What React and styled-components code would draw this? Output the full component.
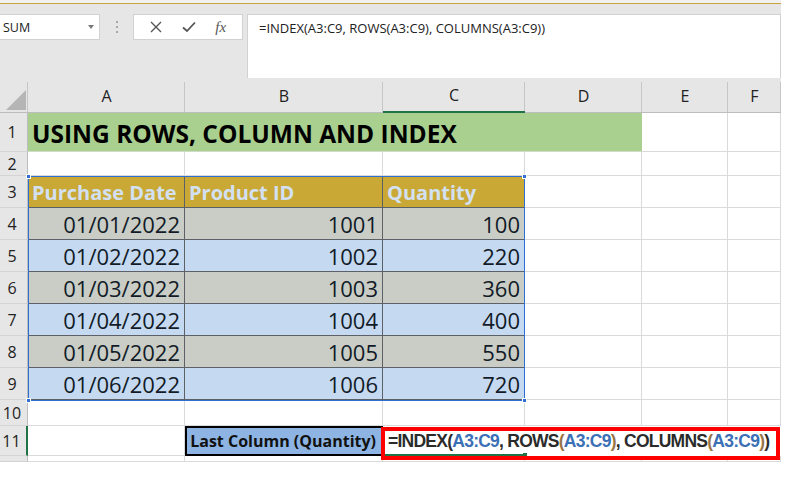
import React from 'react';
import styled, { createGlobalStyle } from 'styled-components';

const GlobalStyle = createGlobalStyle`
  html, body {
    margin: 0;
    padding: 0;
    background: #fff;
  }
  body {
    width: 792px;
    height: 480px;
    overflow: hidden;
    font-family: "Open Sans", "Noto Sans", sans-serif;
  }
  * { box-sizing: border-box; }
`;

const COLS = '28px 157px 198px 142px 117px 86px 53px';

const Page = styled.div`
  width: 792px;
  height: 480px;
  background: #fff;
`;

const Excel = styled.div`
  width: 781px;
  display: flex;
  flex-direction: column;
`;

const Ribbon = styled.div`
  height: 78px;
  background: #e6e6e6;
  border-top: 3px solid #f1f1f1;
  display: flex;
  flex-direction: column;
`;

const GoldLine = styled.div`
  height: 1px;
  background: #c9a43c;
`;

const Toolbar = styled.div`
  flex: 1;
  display: flex;
  align-items: flex-start;
  padding-top: 10px;
`;

const NameBox = styled.div`
  width: 100px;
  height: 26px;
  background: #fff;
  border: 1px solid #d2d2d2;
  border-left: none;
  display: flex;
  align-items: center;
  justify-content: space-between;
  padding: 0 5px 0 3px;
  font-size: 12.5px;
  color: #222;
`;

const Caret = styled.span`
  width: 0;
  height: 0;
  border-left: 3px solid transparent;
  border-right: 3px solid transparent;
  border-top: 4px solid #7a7a7a;
`;

const Grip = styled.div`
  width: 33px;
  height: 26px;
  display: flex;
  flex-direction: column;
  align-items: center;
  justify-content: center;
  gap: 3px;
`;

const Dot = styled.span`
  width: 2px;
  height: 2px;
  background: #a8a8a8;
`;

const ButtonBox = styled.div`
  width: 110px;
  height: 26px;
  background: #fff;
  border: 1px solid #d2d2d2;
  display: flex;
  align-items: center;
  justify-content: space-around;
  padding: 0 6px;
  color: #555;
`;

const Fx = styled.span`
  font-family: "Liberation Serif", serif;
  font-style: italic;
  font-size: 15px;
  color: #555;
  line-height: 1;
`;

const FormulaBar = styled.div`
  margin-left: 4px;
  flex: 1;
  height: 64px;
  background: #fff;
  border: 1px solid #d2d2d2;
  border-bottom: none;
  padding: 4px 11px;
  font-size: 13px;
  color: #222;
`;

const Sheet = styled.div`
  position: relative;
  display: flex;
  flex-direction: column;
`;

const Row = styled.div`
  display: grid;
  grid-template-columns: ${COLS};
  height: ${p => p.$h}px;
`;

const ColHead = styled.div`
  position: relative;
  background: #e6e6e6;
  border-bottom: 1px solid #bdbdbd;
  display: flex;
  align-items: flex-end;
  justify-content: center;
  padding-bottom: 5px;
  font-size: 16px;
  color: #222;
  &::after {
    content: '';
    position: absolute;
    right: 0;
    top: 4px;
    bottom: 0;
    width: 1px;
    background: #c6c6c6;
  }
  ${p => p.$active && `border-bottom: 2px solid #217346;`}
`;

const Corner = styled(ColHead)`
  padding: 0 2px 2px 0;
  justify-content: flex-end;
`;

const RowHead = styled.div`
  background: #e6e6e6;
  border-right: 1px solid #bdbdbd;
  border-bottom: 1px solid #d4d4d4;
  display: flex;
  align-items: center;
  justify-content: center;
  padding-right: 3px;
  font-size: 16px;
  color: #222;
  ${p => p.$active && `border-right: 2px solid #217346;`}
`;

const Cell = styled.div`
  position: relative;
  background: ${p => p.$bg || '#fff'};
  border-right: 1px solid ${p => (p.$dark ? '#5c6167' : '#dadada')};
  border-bottom: 1px solid ${p => (p.$dark ? '#5c6167' : '#dadada')};
  grid-column: span ${p => p.$span || 1};
  display: flex;
  align-items: center;
  justify-content: ${p => (p.$right ? 'flex-end' : 'flex-start')};
  padding: 0 4px;
  font-size: 22px;
  color: #121b27;
  white-space: nowrap;
`;

const Title = styled(Cell)`
  font-size: 24.5px;
  font-weight: 700;
  color: #000;
  padding-left: 4px;
  padding-top: 2px;
  border-right: none;
  border-bottom-color: #d0dcc8;
`;

const HeadCell = styled(Cell)`
  font-size: 20px;
  font-weight: 700;
  color: #d3e0f1;
  padding-top: 1px;
`;

const Label = styled.div`
  background: #8db4e2;
  border: 2px solid #000;
  display: flex;
  align-items: center;
  justify-content: flex-end;
  padding-right: 5px;
  font-size: 16px;
  font-weight: 700;
  color: #111;
  white-space: nowrap;
`;

const FormulaCell = styled.div`
  position: relative;
  z-index: 2;
  grid-column: span 4;
  display: flex;
  align-items: center;
  padding-left: 5px;
  font-family: "Liberation Sans", Arial, sans-serif;
  font-weight: 700;
  font-size: 17.5px;
  letter-spacing: -0.75px;
  color: #2b2b2b;
  white-space: nowrap;
`;

const RedFrame = styled.div`
  position: absolute;
  left: -2px;
  top: 1px;
  right: 1px;
  bottom: -4px;
  border: 4px solid #ff0000;
  pointer-events: none;
`;

const ActiveLine = styled.div`
  position: absolute;
  left: 2px;
  width: 140px;
  bottom: 0;
  height: 2px;
  background: #217346;
  &::after {
    content: '';
    position: absolute;
    right: -2px;
    top: -1px;
    width: 4px;
    height: 4px;
    background: #217346;
  }
`;

const Ref = styled.span`
  color: #3b6fb6;
`;

const Paren = styled.span`
  color: #9c7444;
`;

const Selection = styled.div`
  position: absolute;
  z-index: 2;
  left: 28px;
  top: 98px;
  width: 497px;
  height: 225px;
  border: 1.5px solid #2f6fcf;
  pointer-events: none;
`;

const Handle = styled.span`
  position: absolute;
  width: 5px;
  height: 5px;
  background: #2f6fcf;
  border: 1px solid #fff;
  ${p => (p.$top ? 'top: -3px;' : 'bottom: -3px;')}
  ${p => (p.$left ? 'left: -3px;' : 'right: -3px;')}
`;

const data = [
  ['01/01/2022', 1001, 100],
  ['01/02/2022', 1002, 220],
  ['01/03/2022', 1003, 360],
  ['01/04/2022', 1004, 400],
  ['01/05/2022', 1005, 550],
  ['01/06/2022', 1006, 720],
];

const EmptyTail = ({ from }) =>
  ['A', 'B', 'C', 'D', 'E', 'F'].slice(from).map(c => <Cell key={c} />);

export default function App() {
  return (
    <Page>
      <GlobalStyle />
      <Excel>
        <Ribbon>
          <GoldLine />
          <Toolbar>
            <NameBox>
              SUM
              <Caret />
            </NameBox>
            <Grip>
              <Dot />
              <Dot />
              <Dot />
            </Grip>
            <ButtonBox>
              <svg width="12" height="12" viewBox="0 0 12 12">
                <path d="M1 1 L11 11 M11 1 L1 11" stroke="#555" strokeWidth="1.4" fill="none" />
              </svg>
              <svg width="14" height="12" viewBox="0 0 14 12">
                <path d="M1 6.5 L5 10 L13 1.5" stroke="#555" strokeWidth="1.8" fill="none" />
              </svg>
              <Fx>fx</Fx>
            </ButtonBox>
            <FormulaBar>=INDEX(A3:C9, ROWS(A3:C9), COLUMNS(A3:C9))</FormulaBar>
          </Toolbar>
        </Ribbon>

        <Sheet>
          <Row $h={35}>
            <Corner>
              <svg width="20" height="20" viewBox="0 0 20 20">
                <polygon points="20,0 20,20 0,20" fill="#b5b5b5" />
              </svg>
            </Corner>
            <ColHead>A</ColHead>
            <ColHead>B</ColHead>
            <ColHead $active>C</ColHead>
            <ColHead>D</ColHead>
            <ColHead>E</ColHead>
            <ColHead>F</ColHead>
          </Row>

          <Row $h={39}>
            <RowHead>1</RowHead>
            <Title $span={4} $bg="#a9d08e">USING ROWS, COLUMN AND INDEX</Title>
            <Cell />
            <Cell />
          </Row>

          <Row $h={24}>
            <RowHead>2</RowHead>
            <EmptyTail from={0} />
          </Row>

          <Row $h={32}>
            <RowHead>3</RowHead>
            <HeadCell $bg="#c9a835" $dark>Purchase Date</HeadCell>
            <HeadCell $bg="#c9a835" $dark>Product ID</HeadCell>
            <HeadCell $bg="#c9a835" $dark>Quantity</HeadCell>
            <EmptyTail from={3} />
          </Row>

          {data.map(([d, id, q], i) => {
            const bg = i % 2 === 0 ? '#c9cdc6' : '#c5d9f1';
            return (
              <Row $h={32} key={d}>
                <RowHead>{i + 4}</RowHead>
                <Cell $bg={bg} $dark $right>{d}</Cell>
                <Cell $bg={bg} $dark $right>{id}</Cell>
                <Cell $bg={bg} $dark $right>{q}</Cell>
                <EmptyTail from={3} />
              </Row>
            );
          })}

          <Row $h={26}>
            <RowHead>10</RowHead>
            <EmptyTail from={0} />
          </Row>

          <Row $h={30}>
            <RowHead $active>11</RowHead>
            <Cell />
            <Label>Last Column (Quantity)</Label>
            <FormulaCell>
              =INDEX(<Ref>A3:C9</Ref>, ROWS<Paren>(</Paren><Ref>A3:C9</Ref><Paren>)</Paren>, COLUMNS<Paren>(</Paren><Ref>A3:C9</Ref><Paren>)</Paren>)
              <ActiveLine />
              <RedFrame />
            </FormulaCell>
          </Row>

          <Row $h={6}>
            <RowHead />
            <EmptyTail from={0} />
          </Row>

          <Selection>
            <Handle $top $left />
            <Handle $top />
            <Handle $left />
            <Handle />
          </Selection>
        </Sheet>
      </Excel>
    </Page>
  );
}
